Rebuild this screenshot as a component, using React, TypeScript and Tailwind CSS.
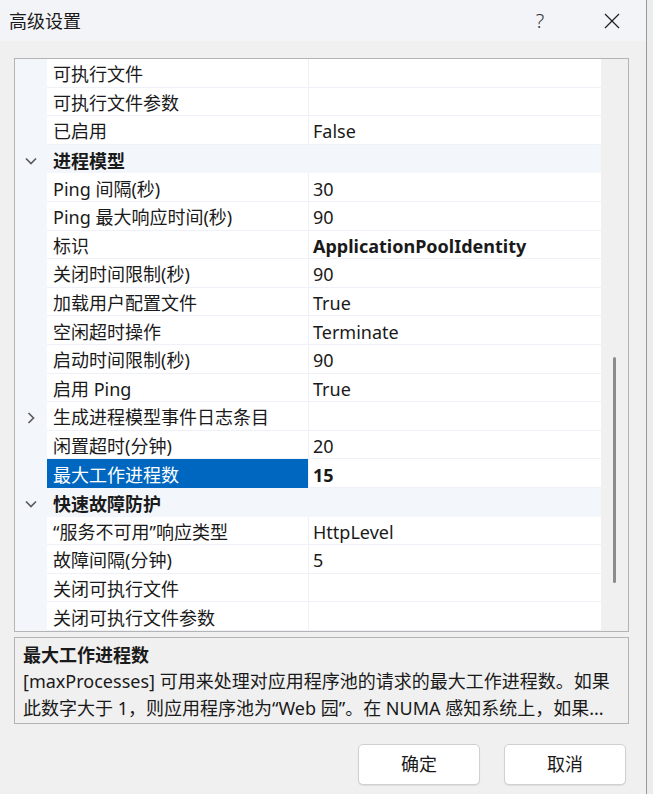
import React from 'react';

type Row = {
  name: string;
  value?: string;
  bold?: boolean;
  selected?: boolean;
  category?: boolean;
  expandable?: boolean;
};

const rows: Row[] = [
  { name: '可执行文件' },
  { name: '可执行文件参数' },
  { name: '已启用', value: 'False' },
  { name: '进程模型', category: true },
  { name: 'Ping 间隔(秒)', value: '30' },
  { name: 'Ping 最大响应时间(秒)', value: '90' },
  { name: '标识', value: 'ApplicationPoolIdentity', bold: true },
  { name: '关闭时间限制(秒)', value: '90' },
  { name: '加载用户配置文件', value: 'True' },
  { name: '空闲超时操作', value: 'Terminate' },
  { name: '启动时间限制(秒)', value: '90' },
  { name: '启用 Ping', value: 'True' },
  { name: '生成进程模型事件日志条目', expandable: true },
  { name: '闲置超时(分钟)', value: '20' },
  { name: '最大工作进程数', value: '15', bold: true, selected: true },
  { name: '快速故障防护', category: true },
  { name: '“服务不可用”响应类型', value: 'HttpLevel' },
  { name: '故障间隔(分钟)', value: '5' },
  { name: '关闭可执行文件' },
  { name: '关闭可执行文件参数' },
];

function Chevron({ down }: { down: boolean }) {
  return (
    <svg width="14" height="14" viewBox="0 0 14 14" fill="none" stroke="#5c5c5c" strokeWidth="1.7">
      {down ? <polyline points="2,4.5 7,9.5 12,4.5" /> : <polyline points="4.5,2 9.5,7 4.5,12" />}
    </svg>
  );
}

function GridRow({ row }: { row: Row }) {
  if (row.category) {
    return (
      <div className="flex h-[28.6px] items-center bg-[#f3f6fb] pt-[3px]">
        <div className="flex w-[32px] justify-center">
          <Chevron down />
        </div>
        <div className="pl-[6px] font-bold text-[#1a1a1a]">{row.name}</div>
      </div>
    );
  }
  return (
    <div className="flex h-[28.6px]">
      <div className="flex w-[32px] shrink-0 items-center justify-center bg-[#f3f6fb] pt-[3px]">
        {row.expandable && <Chevron down={false} />}
      </div>
      <div
        className={
          row.selected
            ? 'flex w-[261px] shrink-0 items-center bg-[#0067c0] pt-[3px] pl-[6px] text-white'
            : 'flex w-[261px] shrink-0 items-center border-b border-[#eef2f8] bg-white pt-[3px] pl-[6px] text-[#1a1a1a]'
        }
      >
        <span className="whitespace-nowrap">{row.name}</span>
      </div>
      <div className="flex flex-1 items-center border-b border-l border-[#eef2f8] bg-white pt-[3px] pl-[4px] text-[#1a1a1a]">
        <span className={row.bold ? 'whitespace-nowrap font-bold' : 'whitespace-nowrap'}>{row.value}</span>
      </div>
    </div>
  );
}

export default function App() {
  return (
    <div
      className="flex h-[794px] w-[653px] overflow-hidden bg-[#f0f0f0] text-[18px] leading-none"
      style={{ fontFamily: '"Noto Sans", "Noto Sans CJK SC", sans-serif' }}
    >
      <div className="flex w-[646px] shrink-0 flex-col">
        {/* Title bar */}
        <div className="flex h-[41px] items-center bg-[#f3f4f7] pl-[9px]">
          <div className="flex-1 text-[#1a1a1a]">高级设置</div>
          <div className="w-[30px] text-center text-[20px] font-light text-[#333]">?</div>
          <div className="ml-[45px] mr-[22px] flex w-[24px] justify-center">
            <svg width="16" height="16" viewBox="0 0 16 16" stroke="#222" strokeWidth="1.2">
              <line x1="1" y1="1" x2="15" y2="15" />
              <line x1="15" y1="1" x2="1" y2="15" />
            </svg>
          </div>
        </div>

        {/* Body */}
        <div className="flex flex-1 flex-col px-[14px] pt-[17px]">
          {/* Property grid */}
          <div className="flex w-[615px] border border-[#b4b4b4]">
            <div className="flex-1">
              {rows.map((r, i) => (
                <GridRow key={i} row={r} />
              ))}
            </div>
            <div className="flex w-[27px] justify-center bg-[#f0f0f0] pt-[298px]">
              <div className="h-[226px] w-[3px] rounded-full bg-[#8c8c8c]" />
            </div>
          </div>

          {/* Description */}
          <div className="mt-[5px] w-[615px] border border-[#b4b4b4] px-[8px] pt-[8px] pb-[1px] text-[#1a1a1a]">
            <div className="h-[20px] font-bold">最大工作进程数</div>
            <div className="mt-[2px] whitespace-nowrap leading-[27px]">
              [maxProcesses] 可用来处理对应用程序池的请求的最大工作进程数。如果
            </div>
            <div className="whitespace-nowrap leading-[27px]">
              此数字大于 1，则应用程序池为“Web 园”。在 NUMA 感知系统上，如果...
            </div>
          </div>

          {/* Buttons */}
          <div className="mt-[20px] flex justify-end gap-[24px] pr-[6px]">
            <button className="h-[41px] w-[122px] rounded-[5px] border border-[#d0d0d0] bg-white text-[#1a1a1a] shadow-[0_1px_1px_rgba(0,0,0,0.08)]">
              确定
            </button>
            <button className="h-[41px] w-[122px] rounded-[5px] border border-[#d0d0d0] bg-white text-[#1a1a1a] shadow-[0_1px_1px_rgba(0,0,0,0.08)]">
              取消
            </button>
          </div>
        </div>
      </div>

      {/* Edge of the window behind */}
      <div className="flex-1 border-l border-[#9a9a9a] bg-[#ececec]" />
    </div>
  );
}
